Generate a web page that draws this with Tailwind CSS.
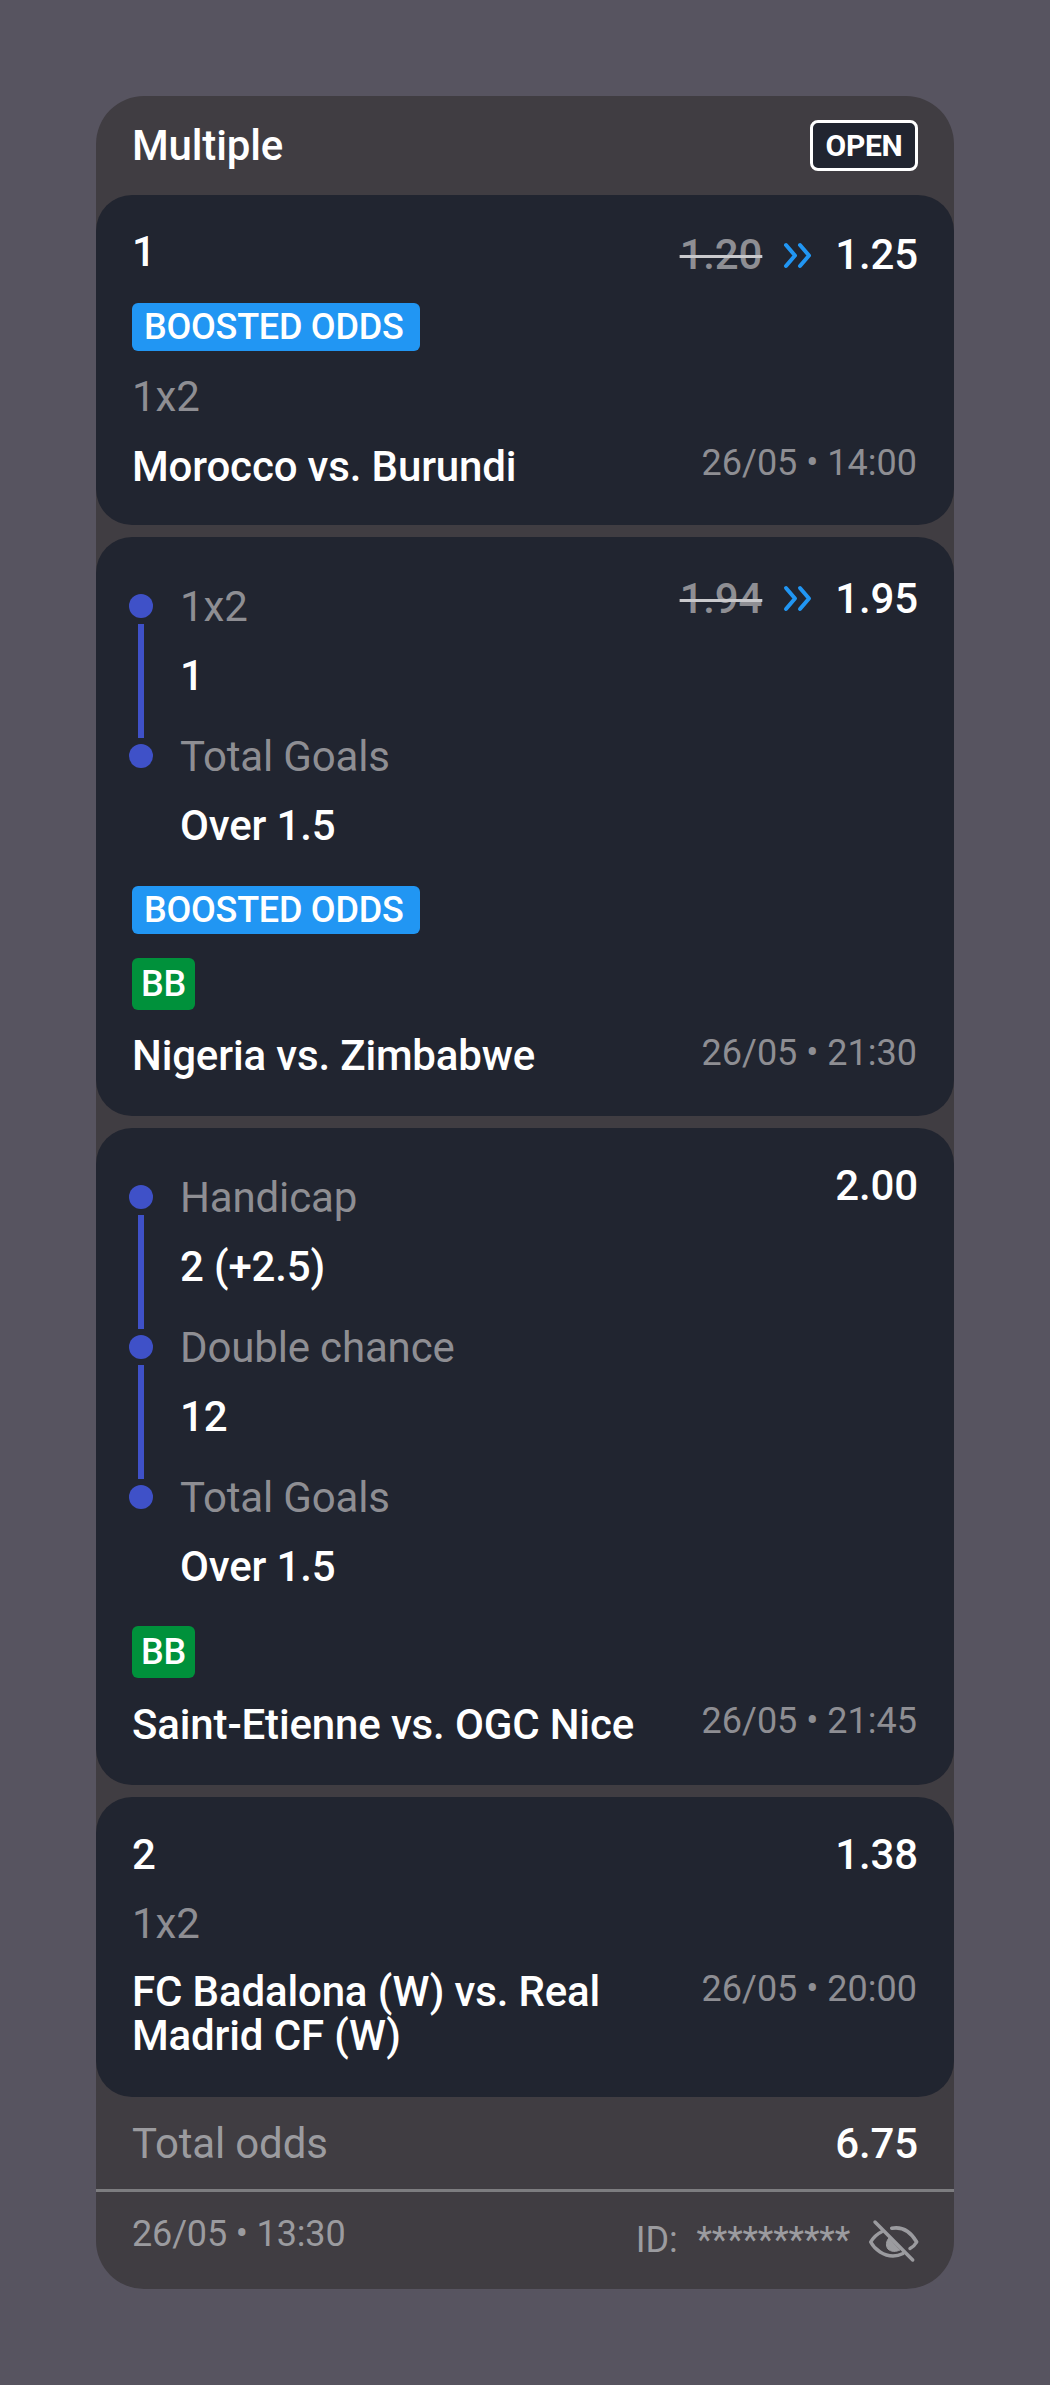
<!DOCTYPE html>
<html lang="en">
<head>
  <meta charset="utf-8" />
  <title>Multiple</title>
  <script src="https://cdn.jsdelivr.net/npm/@tailwindcss/browser@4"></script>
</head>
<body class="bg-[#575460] font-['Roboto',sans-serif] text-white tracking-[-0.15px] min-h-[2385px]">
  <div class="pt-[96px] px-[96px]">
    <div class="w-[858px] h-[2193px] bg-[#403d42] rounded-[48px] overflow-hidden">

      <!-- header -->
      <div class="flex items-center justify-between h-[99px] px-9">
        <span class="text-[42px] font-medium leading-[44px]">Multiple</span>
        <span class="flex items-center justify-center w-[108px] h-[51px] border-[3px] border-white rounded-[8px] bg-[#212530] text-[30px] font-bold tracking-[-0.3px]">OPEN</span>
      </div>

      <div class="flex flex-col gap-3">
        <!-- card 1 -->
        <div class="h-[330px] bg-[#212530] rounded-[36px] px-9 pt-[36px]">
          <div class="flex items-start justify-between">
            <span class="text-[42px] font-medium leading-[42px]">1</span>
            <div class="flex items-center h-[48px]">
              <span class="text-[42px] text-[#8e8e93] font-medium line-through decoration-[#c9c9cc] decoration-[3px] leading-[48px]">1.20</span>
              <svg class="w-[30px] h-[27px] ml-[21px] mr-[22px]" viewBox="0 0 30 27" fill="none" stroke="#2196f3" stroke-width="4" stroke-linecap="round" stroke-linejoin="round"><path d="M3 3l9 10.5L3 24M17 3l9 10.5L17 24"/></svg>
              <span class="text-[42px] font-medium leading-[48px]">1.25</span>
            </div>
          </div>
          <div class="mt-[24px] w-[288px] h-[48px] pl-3 bg-[#2196f3] rounded-[6px] flex items-center text-[36px] font-medium tracking-[-0.25px]">BOOSTED ODDS</div>
          <div class="mt-[26px] text-[42px] text-[#8e8e93] leading-[40px]">1x2</div>
          <div class="mt-[27px] flex justify-between items-start">
            <span class="text-[42px] font-medium leading-[45px]">Morocco vs. Burundi</span>
            <span class="text-[36px] text-[#8e8e93] tracking-normal leading-[40px] -mt-[1px] pr-[1px]">26/05 • 14:00</span>
          </div>
        </div>

        <!-- card 2 -->
        <div class="h-[579px] bg-[#212530] rounded-[36px] px-9 pt-[40px]">
          <div class="flex items-start justify-between">
            <div class="flex mt-[17px] -ml-[3px]">
              <div class="flex flex-col items-center w-6">
                <div class="size-6 rounded-full bg-[#3f51c8]"></div>
                <div class="w-1.5 h-[114px] my-1.5 bg-[#3f51c8]"></div>
                <div class="size-6 rounded-full bg-[#3f51c8]"></div>
              </div>
              <div class="ml-[27px] pt-px">
                <div class="text-[42px] text-[#8e8e93] leading-6">1x2</div>
                <div class="mt-[45px] text-[42px] font-medium leading-6">1</div>
                <div class="mt-[57px] text-[42px] text-[#8e8e93] leading-6">Total Goals</div>
                <div class="mt-[45px] text-[42px] font-medium leading-6">Over 1.5</div>
              </div>
            </div>
            <div class="flex items-center h-[42px]">
              <span class="text-[42px] text-[#8e8e93] font-medium line-through decoration-[#c9c9cc] decoration-[3px]">1.94</span>
              <svg class="w-[30px] h-[27px] ml-[21px] mr-[22px]" viewBox="0 0 30 27" fill="none" stroke="#2196f3" stroke-width="4" stroke-linecap="round" stroke-linejoin="round"><path d="M3 3l9 10.5L3 24M17 3l9 10.5L17 24"/></svg>
              <span class="text-[42px] font-medium">1.95</span>
            </div>
          </div>
          <div class="mt-[48px] w-[288px] h-[48px] pl-3 bg-[#2196f3] rounded-[6px] flex items-center text-[36px] font-medium tracking-[-0.25px]">BOOSTED ODDS</div>
          <div class="mt-[24px] w-[63px] h-[52px] bg-[#00913b] rounded-[6px] flex items-center justify-center text-[36px] font-medium">BB</div>
          <div class="mt-[23px] flex justify-between items-start">
            <span class="text-[42px] font-medium leading-[45px]">Nigeria vs. Zimbabwe</span>
            <span class="text-[36px] text-[#8e8e93] tracking-normal leading-[40px] pr-[1px]">26/05 • 21:30</span>
          </div>
        </div>

        <!-- card 3 -->
        <div class="h-[657px] bg-[#212530] rounded-[36px] px-9 pt-[37px]">
          <div class="flex items-start justify-between">
            <div class="flex mt-[20px] -ml-[3px]">
              <div class="flex flex-col items-center w-6">
                <div class="size-6 rounded-full bg-[#3f51c8]"></div>
                <div class="w-1.5 h-[114px] my-1.5 bg-[#3f51c8]"></div>
                <div class="size-6 rounded-full bg-[#3f51c8]"></div>
                <div class="w-1.5 h-[114px] my-1.5 bg-[#3f51c8]"></div>
                <div class="size-6 rounded-full bg-[#3f51c8]"></div>
              </div>
              <div class="ml-[27px] pt-px">
                <div class="text-[42px] text-[#8e8e93] leading-6">Handicap</div>
                <div class="mt-[45px] text-[42px] font-medium leading-6">2 (+2.5)</div>
                <div class="mt-[57px] text-[42px] text-[#8e8e93] leading-6">Double chance</div>
                <div class="mt-[45px] text-[42px] font-medium leading-6">12</div>
                <div class="mt-[57px] text-[42px] text-[#8e8e93] leading-6">Total Goals</div>
                <div class="mt-[45px] text-[42px] font-medium leading-6">Over 1.5</div>
              </div>
            </div>
            <span class="text-[42px] font-medium leading-[42px]">2.00</span>
          </div>
          <div class="mt-[47px] w-[63px] h-[52px] bg-[#00913b] rounded-[6px] flex items-center justify-center text-[36px] font-medium">BB</div>
          <div class="mt-[24px] flex justify-between items-start">
            <span class="text-[42px] font-medium leading-[45px]">Saint-Etienne vs. OGC Nice</span>
            <span class="text-[36px] text-[#8e8e93] tracking-normal leading-[40px] -mt-[1px] pr-[1px]">26/05 • 21:45</span>
          </div>
        </div>

        <!-- card 4 -->
        <div class="h-[300px] bg-[#212530] rounded-[36px] px-9 pt-[37px]">
          <div class="flex items-start justify-between">
            <span class="text-[42px] font-medium leading-[42px]">2</span>
            <span class="text-[42px] font-medium leading-[42px]">1.38</span>
          </div>
          <div class="mt-[28px] text-[42px] text-[#8e8e93] leading-[40px]">1x2</div>
          <div class="mt-[26px] flex justify-between items-start">
            <span class="w-[500px] text-[42px] font-medium leading-[44px]">FC Badalona (W) vs. Real Madrid CF (W)</span>
            <span class="text-[36px] text-[#8e8e93] tracking-normal leading-[40px] -mt-[1px] pr-[1px]">26/05 • 20:00</span>
          </div>
        </div>
      </div>

      <!-- total -->
      <div class="flex items-center justify-between h-[95px] px-9 border-b-[3px] border-[#7d7d80]">
        <span class="text-[42px] text-[#9b9b9f]">Total odds</span>
        <span class="text-[42px] font-medium">6.75</span>
      </div>

      <!-- footer -->
      <div class="flex items-start justify-between px-9 pt-[22px]">
        <span class="text-[36px] text-[#9b9b9f] leading-[40px]">26/05 • 13:30</span>
        <div class="flex items-center -mt-[4px]">
          <span class="text-[36px] text-[#9b9b9f] leading-[40px]">ID:</span>
          <span class="ml-[19px] text-[36px] text-[#9b9b9f] leading-[40px]">**********</span>
          <svg class="w-[70px] h-[60px] ml-[10px] -mr-[12px]" viewBox="0 0 70 60" fill="none" stroke="#9b9b9f" stroke-width="3.5" stroke-linecap="round" stroke-linejoin="round">
            <path d="M15 12 52.700 50"/>
            <path d="M31.700 18.300C44 16 52 24 56.700 32 55 35 53 37 50 38.500"/>
            <path d="M21.700 21.700C17 24 13 28 10.700 32 15 40 24 46 33 46 36 46 39 45.500 43 43.500"/>
            <path d="M29 28C26 31 25.500 36 28 39 31 42 36 42 40 40Z" fill="#9b9b9f" stroke-width="1"/>
          </svg>
        </div>
      </div>
    </div>
  </div>
</body>
</html>
